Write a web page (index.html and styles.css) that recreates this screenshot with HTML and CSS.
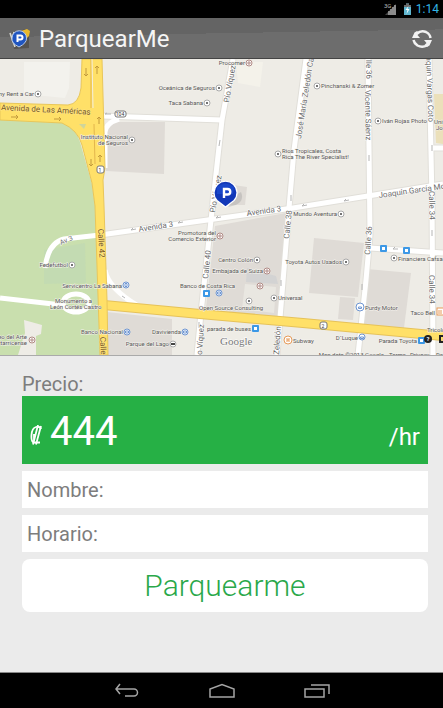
FILE: index.html
```
<!DOCTYPE html>
<html lang="es">
<head>
    <meta charset="UTF-8">
    <meta name="viewport" content="width=device-width, initial-scale=1.0">
    <title>ParquearMe</title>
    <link rel="stylesheet" href="styles.css">
</head>
<body>
    <div class="status-bar">
        <svg class="status-icons" viewBox="0 0 28 18" width="28" height="18">
            <text x="0" y="8" class="network">3G</text>
            <path d="M1 15L12 4V15z" fill="#444"/>
            <path d="M5 15V11M7 15V9M9 15V7M11 15V5" stroke="#aaa" stroke-width="1.4"/>
            <path d="M20 5h2V3.500h3V5h2V15h-7z" fill="#5fb6cf"/>
            <path d="M20 5h2V3.500h3V5h2V7h-7z" fill="#6b6b6b"/>
            <path d="M24.500 6L21.500 10h2l-1 4 3-5h-2z" fill="#fff"/>
        </svg>
        <span class="clock">1:14</span>
    </div>

    <header class="action-bar">
        <svg class="app-icon" viewBox="0 0 24 24" width="24" height="24">
            <path d="M4 5L8 6 17 2 21 5V21L6 22z" fill="#55534f"/>
            <path d="M2 6L7 20M6 5L4 12" stroke="#d8d8d0" stroke-width="1.600"/>
            <path d="M13 4L19 2 22 4 21 9 19 11z" fill="#e9b92c"/>
            <path d="M11 20Q3 16 4 11A7 7 0 0 1 18.500 11Q19 16 11 20z" fill="#1f55c0" stroke="#b9cbe8" stroke-width="1"/>
            <path d="M9.500 15V8.500h3a2 2 0 0 1 0 4h-3" fill="none" stroke="#fff" stroke-width="2"/>
        </svg>
        <h1>ParquearMe</h1>
        <button type="button" class="refresh-btn" aria-label="Actualizar">
            <svg viewBox="0 0 24 24" width="24" height="24" fill="none" stroke="#f2f2f2" stroke-width="2.500">
                <path d="M7 6.500Q11 3 16 5Q20 7 20.500 11M17 18.500Q12 21 7.500 18.500Q4 16 3.500 13"/>
                <path d="M2 3L4.500 5.500 2 11H10L7.500 8 9.500 6 7 4 4.500 5.500z" fill="#f2f2f2" stroke="none"/>
                <path d="M22 21L19.500 18.500 22 13H14L16.500 16 14.500 18 17 20 19.500 18.500z" fill="#f2f2f2" stroke="none"/>
            </svg>
        </button>
    </header>

    <main>
        <svg class="map" viewBox="0 59 443 296" preserveAspectRatio="xMidYMid slice" role="img" aria-label="Mapa">
            <rect x="0" y="59" width="443" height="296" fill="#eeece6"/>

            <!-- parque y manzanas -->
            <path d="M0 119L62 122Q76 128 80 142L92 184 95 206 101 355H0z" fill="#c9dfae"/>
            <path d="M24 62H70L69 88 65 98 24 94z" fill="#f3f2ed"/>
            <path d="M24 320L42 325 41 334 36 336V355H18L25 333z" fill="#eeece6"/>
            <path d="M44 250L85 243 86 283 44 284z" fill="#bfd9b4" opacity=".6"/>
            <g fill="#dfdbd6">
                <path d="M107 122H165L164 174 106 171z"/>
                <path d="M215 226L286 213 278 319 206 308z"/>
                <path d="M107 312L172 319V355H107z"/>
                <path d="M314 238L364 243 358 297 309 293z"/>
                <path d="M367 269L411 273 404 328 361 324z"/>
                <path d="M340 297L355 298 353 320 338 319z"/>
                <path d="M227 184L247 187 245 205H228z"/>
            </g>
            <path d="M247 268L276 276 278 284 246 282z" fill="#d3d3d3"/>
            <path d="M245 284L276 287 274 313 242 309z" fill="#e9e7e1"/>
            <path d="M236 62H263L260 87 238 83z" fill="#f4f2ea"/>
            <path d="M434 94H443V144L436 143z" fill="#ebe0ba"/>

            <!-- calles -->
            <g class="road-edge">
                <path d="M102 116L222 120"/>
                <path d="M233 59L222 120 215 183 201 313 197 355"/>
                <path d="M306 59L294 150 289 208 277 355"/>
                <path d="M368 59L370 235 366 280 358 355"/>
                <path d="M429 59L432 200 433 355"/>
                <path d="M100 235L150 228 293 208 443 184"/>
                <path d="M370 248L443 253M432 148H443"/>
            </g>
            <g class="road">
                <path d="M102 116L222 120"/>
                <path d="M233 59L222 120 215 183 201 313 197 355"/>
                <path d="M306 59L294 150 289 208 277 355"/>
                <path d="M368 59L370 235 366 280 358 355"/>
                <path d="M429 59L432 200 433 355"/>
                <path d="M45 268Q48 243 64 239L100 235 150 228 293 208 443 184"/>
                <path d="M370 248L443 253M432 148H443"/>
                <path d="M105 168V132Q106 123 119 119M105 270Q108 288 138 306"/>
                <path d="M0 298L62 305"/>
                <ellipse cx="76" cy="303" rx="13" ry="9"/>
            </g>

            <!-- avenidas principales -->
            <path d="M104 305L200 314 303 323 443 336" fill="none" stroke="#e6c25a" stroke-width="10"/>
            <path d="M104 305L200 314 303 323 443 336" fill="none" stroke="#ffe068" stroke-width="8"/>
            <path d="M82 59L81 88Q79 104 68 105L0 103V120L62 123Q78 130 82 145L92 183 95 206 100 355H108L107 300 104 206 103 180 105 168 102 59z" fill="#ffe068" stroke="#e8c65a"/>
            <path d="M91 59V108M94 124L95 164" stroke="#e3b64d" fill="none"/>
            <path d="M92 59L93 108" stroke="#f3eee0" fill="none"/>
            <path d="M79 124H86L84 129z" fill="#cfd59b"/>

            <!-- sentido de las calles -->
            <g class="arrows">
                <path d="M86 68v8m-2-2l2 2 2-2M97 74v-8m-2 2l2-2 2 2M91 159v7m-2-2l2 2 2-2M100 162v-7m-2 2l2-2 2 2M99 124v-7m-2 2l2-2 2 2"/>
                <path d="M11 117h7m-2-2l2 2-2 2M54 119h7m-2-2l2 2-2 2"/>
            </g>
            <g class="arrows small">
                <path d="M111 114h-6l2-1M220 140l-1 6M136 229l-5 1 2-2M183 222l-5 1 2-2M221 217l-5 1 2-2M291 195v6M307 205l-5 1 2-2M349 200l-5 1 2-2M369 155v6M432 145v6M432 230v6M362 284v6M199 322v6M281 280v6M398 249l-5 0 2-2M122 296l3 2"/>
            </g>

            <!-- nombres de calles -->
            <g class="street">
                <text class="avenue" transform="translate(1 110) rotate(3)">Avenida de Las Américas</text>
                <text class="avenue" transform="translate(98 229) rotate(87)">Calle 42</text>
                <text class="avenue" transform="translate(100 337) rotate(87)">Calle</text>
                <text transform="translate(229 103) rotate(-80)">Pío Víquez</text>
                <text transform="translate(215 213) rotate(-80)">Pío Víquez</text>
                <text transform="translate(301 139) rotate(-81)">José María Zeledón  Calle</text>
                <text transform="translate(366 60) rotate(89)">lle 36</text>
                <text transform="translate(365 90) rotate(89)">Vicente Sáenz</text>
                <text transform="translate(426 52) rotate(88)">oaquín Vargas Coto</text>
                <text transform="translate(139 232) rotate(-9)">Avenida 3</text>
                <text transform="translate(247 216) rotate(-8)">Avenida 3</text>
                <text transform="translate(61 245) rotate(-24)" class="minor">Av 3</text>
                <text transform="translate(379 198) rotate(-8)">Joaquín García Mon</text>
                <text transform="translate(208 279) rotate(-84)">Calle 40</text>
                <text transform="translate(289 239) rotate(-84)">Calle 38</text>
                <text transform="translate(370 255) rotate(-86)">Calle 36</text>
                <text transform="translate(429 191) rotate(89)">Calle 34</text>
                <text transform="translate(429 275) rotate(89)">Calle 34</text>
                <text transform="translate(202 355) rotate(-86)">o Víquez</text>
                <text transform="translate(279 355) rotate(-86)">Zeledón</text>
            </g>

            <!-- lugares, con el icono a la derecha -->
            <g class="place before-icon">
                <text x="34" y="96">ny Rent a Car</text>
                <text x="128" y="139">Instituto Nacional</text>
                <text x="128" y="145">de Seguros</text>
                <text x="245" y="65">Procomer</text>
                <text x="215" y="90">Oceánica de Seguros</text>
                <text x="203" y="105">Taca Sabana</text>
                <text x="68" y="267">Fedefutbol</text>
                <text x="122" y="288">Servicentro La Sabana</text>
                <text x="27" y="339">Museo del Arte</text>
                <text x="27" y="345">Costarricense</text>
                <text x="123" y="334">Banco Nacional</text>
                <text x="169" y="346">Parque del Lago</text>
                <text x="181" y="334">Davivienda</text>
                <text x="216" y="235">Promotora del</text>
                <text x="216" y="241">Comercio Exterior</text>
                <text x="253" y="262">Centro Colón</text>
                <text x="263" y="273">Embajada de Suiza</text>
                <text x="251" y="331">parada de buses</text>
                <text x="337" y="216">Mundo Aventura</text>
                <text x="342" y="264">Toyota Autos Usados</text>
                <text x="435" y="315">Taco Bell</text>
                <text x="358" y="340">D´Luque</text>
                <text x="417" y="343">Parada Toyota</text>
                <text x="384" y="357">Map data ©2013 Google</text>
            </g>
            <g class="place">
                <text x="321" y="88">Pinchanski &amp; Zomer</text>
                <text x="382" y="123">Iván Rojas Photo</text>
                <text x="282" y="153">Rios Tropicales, Costa</text>
                <text x="282" y="159">Rica The River Specialist!</text>
                <text x="434" y="124">Unive</text>
                <text x="436" y="130">José</text>
                <text x="55" y="303">Monumento a</text>
                <text x="50" y="309">León Cortés Castro</text>
                <text x="180" y="288">Banco de Costa Rica</text>
                <text x="199" y="310">Open Source Consulting</text>
                <text x="278" y="300">Universal</text>
                <text x="293" y="343">Subway</text>
                <text x="398" y="261">Financiera Cafsa</text>
                <text x="365" y="310">Purdy Motor</text>
                <text x="427" y="332">Tricolor</text>
                <text x="389" y="357">Terms</text>
                <text x="410" y="357">Privacy</text>
                <text x="436" y="357">Report</text>
            </g>
            <text x="220" y="345" class="google">Google</text>

            <g class="poi">
                <circle cx="38" cy="94" r="3"/><circle cx="132" cy="140" r="3"/><circle cx="219" cy="88" r="3"/>
                <circle cx="207" cy="103" r="3"/><circle cx="317" cy="86" r="3"/><circle cx="378" cy="121" r="3"/>
                <circle cx="278" cy="154" r="3"/><circle cx="72" cy="265" r="3"/><circle cx="257" cy="260" r="3"/>
                <circle cx="249" cy="301" r="3"/><circle cx="274" cy="298" r="3"/><circle cx="341" cy="214" r="3"/>
                <circle cx="346" cy="262" r="3"/><circle cx="394" cy="258" r="3"/><circle cx="173" cy="344" r="3"/>
            </g>
            <g class="poi-dot">
                <circle cx="38" cy="94" r="1"/><circle cx="132" cy="140" r="1"/><circle cx="219" cy="88" r="1"/>
                <circle cx="207" cy="103" r="1"/><circle cx="317" cy="86" r="1"/><circle cx="378" cy="121" r="1"/>
                <circle cx="278" cy="154" r="1"/><circle cx="72" cy="265" r="1"/><circle cx="257" cy="260" r="1"/>
                <circle cx="249" cy="301" r="1"/><circle cx="274" cy="298" r="1"/><circle cx="341" cy="214" r="1"/>
                <circle cx="346" cy="262" r="1"/><circle cx="394" cy="258" r="1"/><path d="M171 343h4v2h-4z"/>
            </g>
            <g class="poi civic">
                <circle cx="249" cy="63" r="3"/><circle cx="220" cy="236" r="3"/><circle cx="267" cy="271" r="3"/>
                <circle cx="260" cy="286" r="3"/><circle cx="32" cy="340" r="3"/>
                <path d="M248 62h2v2h-2zM219 235h2v2h-2zM266 270h2v2h-2zM259 285h2v2h-2zM31 339h2v2h-2z"/>
            </g>
            <g class="poi bank">
                <circle cx="126" cy="285" r="3"/><circle cx="127" cy="332" r="3"/><circle cx="185" cy="332" r="3"/>
                <circle cx="219" cy="293" r="3"/><circle cx="360" cy="307" r="4"/><circle cx="362" cy="337" r="3"/>
                <path d="M125 283.500h2v3h-2zM125.500 331h3v2h-3zM183.500 331h3v2h-3zM217.500 292h3v2h-3zM358.500 307h3v1.500h-3zM360.500 337h3v1.500h-3z"/>
            </g>
            <g class="poi food">
                <circle cx="288" cy="340" r="4"/><rect x="437" y="308" width="7" height="7"/>
                <path d="M287 338v4M289 338v4M287 340h2M439 310v4M441 310v4"/>
            </g>
            <g class="bus">
                <rect x="203" y="290" width="7" height="7" rx="1"/><rect x="252" y="325" width="7" height="7" rx="1"/>
                <rect x="380" y="245" width="7" height="7" rx="1"/><rect x="403" y="247" width="7" height="7" rx="1"/>
                <rect x="418" y="337" width="7" height="7" rx="1"/>
                <path d="M205 292h3v3h-3zM254 327h3v3h-3zM382 247h3v3h-3zM405 249h3v3h-3zM420 339h3v3h-3z"/>
            </g>
            <circle cx="428" cy="339" r="4" fill="#222"/>
            <text x="428" y="341" class="help">?</text>
            <path d="M443 336h-3v6h3" fill="none" stroke="#222" stroke-width="2"/>

            <g class="shield">
                <rect x="115" y="111" width="11" height="6" rx="2"/>
                <rect x="97" y="166" width="7" height="7" rx="2"/>
                <rect x="320" y="322" width="7" height="7" rx="2"/>
                <text x="120" y="116">104</text>
                <text x="100" y="172">1</text>
                <text x="323" y="328">2</text>
            </g>

            <!-- marcador -->
            <path d="M228 207Q246 204 241 192L234 196z" fill="#999" opacity=".35"/>
            <path d="M225.500 207L217 200.500A11.500 11.500 0 1 1 234 200.500z" fill="#1238b8" stroke="#fff" stroke-width="1.200"/>
            <path d="M217 187Q225 180 234 187L233 194H217z" fill="#2459de" opacity=".45"/>
            <path d="M224 198V189h3.500a2.500 2.500 0 0 1 0 5.500h-3.500" fill="none" stroke="#fff" stroke-width="2.400"/>
        </svg>

        <form class="parking-form">
            <h2>Precio:</h2>
            <div class="price">
                <svg class="colon" viewBox="0 0 12 20" width="12" height="20" fill="none" stroke="#fff" stroke-width="1.800" role="img" aria-label="Colones">
                    <path d="M11 4Q10 1 6 2Q2 3 1.500 10Q1 17 4 17.500H10"/>
                    <path d="M8 0L3 19.500M11 1L6 19.500M4 9V16"/>
                </svg>
                <span class="amount">444</span>
                <span class="unit">/hr</span>
            </div>
            <div class="field">
                <label for="nombre">Nombre:</label>
                <input type="text" id="nombre" readonly>
            </div>
            <div class="field">
                <label for="horario">Horario:</label>
                <input type="text" id="horario" readonly>
            </div>
            <button type="button" class="park-btn">Parquearme</button>
        </form>
    </main>

    <nav class="nav-bar">
        <button type="button" aria-label="Atrás">
            <svg viewBox="0 0 26 16" width="26" height="16"><path d="M6 1L2 6l4 5M2 6H20a3.500 3.500 0 0 1 0 7H11"/></svg>
        </button>
        <button type="button" aria-label="Inicio">
            <svg viewBox="0 0 28 16" width="28" height="16"><path d="M2 14V6L14 1.500 26 6V14z"/></svg>
        </button>
        <button type="button" aria-label="Recientes">
            <svg viewBox="0 0 26 16" width="26" height="16"><path d="M1 6H20V14H1zM7 2H25V11"/></svg>
        </button>
    </nav>
</body>
</html>
```
FILE: styles.css
```
* {
    margin: 0;
    padding: 0;
    box-sizing: border-box;
}

body {
    font-family: Roboto, sans-serif;
    background: #ebebeb;
    min-height: 100vh;
    display: flex;
    flex-direction: column;
}

button {
    font-family: inherit;
    background: none;
    border: none;
    cursor: pointer;
}

svg {
    display: block;
}

.status-bar {
    display: flex;
    justify-content: flex-end;
    align-items: center;
    gap: 4px;
    height: 18px;
    padding-right: 4px;
    background: #000;
}

.network {
    font-size: 6px;
    fill: #bbb;
}

.status-icons {
    overflow: visible;
}

.clock {
    color: #33b5e5;
    font-size: 12px;
    line-height: 20px;
}

.action-bar {
    display: flex;
    align-items: center;
    gap: 7px;
    height: 41px;
    padding: 2px 9px 0 8px;
    background: linear-gradient(179deg, #646464 40%, #6d6d6d 40%);
    border-bottom: 1px solid #444;
}

.action-bar h1 {
    flex: 1;
    color: #f5f5f5;
    font-size: 24px;
    font-weight: 400;
}

/* Mapa */
.map {
    width: 100%;
    height: auto;
    border-bottom: 1px solid #aaa;
}

.road,
.road-edge {
    fill: none;
    stroke: #fff;
    stroke-width: 5px;
}

.road-edge {
    stroke: #e1dfd9;
    stroke-width: 7px;
}

.arrows {
    fill: none;
    stroke: #c29a3c;
}

.arrows.small {
    stroke: #b5b5b5;
}

.street {
    font-size: 8px;
    fill: #6b6b6b;
    stroke: #fff;
    stroke-width: 1px;
    paint-order: stroke;
}

.street .avenue {
    fill: #75551f;
    stroke: #ffe68a;
}

.street .minor {
    font-size: 7px;
}

.place {
    font-size: 6px;
    fill: #555;
    stroke: #f5f3ee;
    stroke-width: 1px;
    paint-order: stroke;
}

.before-icon {
    text-anchor: end;
}

.google {
    font-family: "Liberation Serif", serif;
    font-size: 11px;
    fill: #777;
    stroke: #fff;
    stroke-width: 1px;
    paint-order: stroke;
}

.poi {
    fill: #fff;
    stroke: #aaa;
    stroke-width: 1px;
}

.poi-dot {
    fill: #444;
}

.poi.civic {
    stroke: #b08a85;
}

.poi.bank {
    stroke: #6f96d2;
}

.poi.food {
    stroke: #e79a58;
}

.bus {
    fill: #3c98e6;
}

.bus path {
    fill: #fff;
}

.help {
    font-size: 6px;
    font-weight: 700;
    fill: #fff;
    text-anchor: middle;
}

.shield rect {
    fill: #fff;
    stroke: #777;
}

.shield text {
    font-size: 5px;
    fill: #333;
    text-anchor: middle;
}

/* Formulario */
.parking-form {
    display: flex;
    flex-direction: column;
    gap: 7px;
    padding: 16px 15px 16px 22px;
}

.parking-form h2 {
    margin-bottom: -7px;
    color: #7d7d7d;
    font-size: 20px;
    font-weight: 400;
    line-height: 24px;
}

.price {
    display: flex;
    align-items: baseline;
    gap: 8px;
    height: 68px;
    padding: 12px 8px;
    background: #26b045;
    color: #fff;
}

.amount {
    flex: 1;
    font-size: 40px;
    line-height: 48px;
}

.unit {
    font-size: 24px;
}

.field {
    display: flex;
    align-items: center;
    gap: 8px;
    height: 37px;
    padding: 0 5px;
    background: #fff;
    color: #7d7d7d;
    font-size: 20px;
}

.field input {
    flex: 1;
    min-width: 0;
    border: none;
    outline: none;
    background: none;
    color: inherit;
    font: inherit;
}

.park-btn {
    height: 53px;
    border-radius: 8px;
    background: #fff;
    color: #2aa84a;
    font-size: 30px;
    font-weight: 300;
}

/* Barra de navegación */
.nav-bar {
    display: flex;
    justify-content: center;
    align-items: center;
    gap: 68px;
    height: 36px;
    margin-top: auto;
    border-top: 1px solid #888;
    background: #000;
}

.nav-bar svg {
    fill: none;
    stroke: #a5a5a5;
    stroke-width: 1.5px;
}
```
